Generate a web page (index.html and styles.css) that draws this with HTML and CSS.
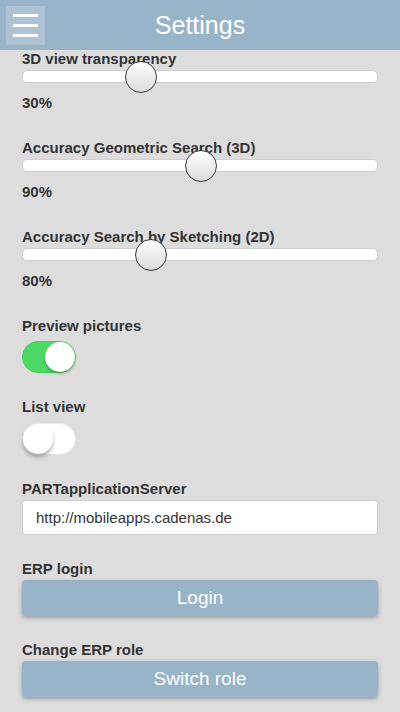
FILE: index.html
```html
<!DOCTYPE html>
<html>
<head>
<meta charset="utf-8">
<link rel="stylesheet" href="styles.css">
</head>
<body>
<header class="topbar">
  <button class="menu-btn" aria-label="Menu">
    <span class="bar"></span><span class="bar"></span><span class="bar"></span>
  </button>
  <h1 class="title">Settings</h1>
</header>
<main class="content">
  <section class="field field-slider">
    <div class="label">3D view transparency</div>
    <div class="track"><div class="thumb" style="left:102px"></div></div>
    <div class="value">30%</div>
  </section>
  <section class="field field-slider">
    <div class="label">Accuracy Geometric Search (3D)</div>
    <div class="track"><div class="thumb" style="left:162px"></div></div>
    <div class="value">90%</div>
  </section>
  <section class="field field-slider">
    <div class="label">Accuracy Search by Sketching (2D)</div>
    <div class="track"><div class="thumb" style="left:112px"></div></div>
    <div class="value">80%</div>
  </section>
  <section class="field field-toggle">
    <div class="label">Preview pictures</div>
    <div class="toggle on"><div class="knob"></div></div>
  </section>
  <section class="field field-toggle">
    <div class="label">List view</div>
    <div class="toggle off"><div class="knob"></div></div>
  </section>
  <section class="field field-input">
    <div class="label">PARTapplicationServer</div>
    <div class="input">http://mobileapps.cadenas.de</div>
  </section>
  <section class="field field-button">
    <div class="label">ERP login</div>
    <button class="btn">Login</button>
  </section>
  <section class="field field-button">
    <div class="label">Change ERP role</div>
    <button class="btn">Switch role</button>
  </section>
</main>
</body>
</html>
```
FILE: styles.css
```css
* { box-sizing: border-box; }
html, body {
  margin: 0;
  padding: 0;
  background: #dddddd;
  font-family: "Liberation Sans", Arial, sans-serif;
  color: #333333;
}
.topbar {
  height: 50px;
  background: #98b4c9;
  display: flex;
  align-items: center;
  justify-content: center;
  position: relative;
}
.menu-btn {
  position: absolute;
  left: 6px;
  top: 6px;
  width: 39px;
  height: 39px;
  border: none;
  padding: 0;
  margin: 0;
  background: #adc3d4;
  display: flex;
  flex-direction: column;
  align-items: center;
  justify-content: center;
  gap: 7px;
}
.menu-btn .bar {
  display: block;
  width: 25px;
  height: 3px;
  background: #ffffff;
}
.title {
  margin: 0;
  font-weight: normal;
  font-size: 25px;
  color: #ffffff;
  line-height: 50px;
}
.content {
  padding: 0 22px;
  display: flex;
  flex-direction: column;
}
.label {
  font-size: 15px;
  font-weight: bold;
  line-height: 18px;
  height: 18px;
  color: #333333;
}
.field-slider { margin-bottom: 27px; }
.field-slider .track {
  position: relative;
  margin-top: 2px;
  height: 13px;
  background: #ffffff;
  border: 1px solid #d0d0d0;
  border-radius: 5px;
}
.thumb {
  position: absolute;
  top: 50%;
  width: 32px;
  height: 32px;
  margin-top: -16px;
  border-radius: 50%;
  border: 1px solid #3a3a3a;
  background: linear-gradient(#ffffff, #dcdcdc);
}
.value {
  margin-top: 11px;
  font-size: 15px;
  font-weight: bold;
  line-height: 18px;
}
.field-toggle { margin-bottom: 25px; }
.toggle {
  position: relative;
  margin-top: 6px;
  width: 54px;
  height: 32px;
  border-radius: 16px;
}
.toggle.on {
  background: #4cd964;
  border: 1px solid #45cf5c;
}
.toggle.off {
  margin-top: 7px;
  background: #ffffff;
  border: 1px solid #e6e6e6;
}
.knob {
  position: absolute;
  top: 0;
  width: 30px;
  height: 30px;
  border-radius: 50%;
  background: #ffffff;
}
.toggle.on .knob {
  right: 0;
  box-shadow: 0 2px 3px rgba(0,0,0,0.25);
}
.toggle.off .knob {
  left: 0;
  box-shadow: 0 3px 4px rgba(0,0,0,0.3);
}
.field-input { margin-bottom: 25px; }
.input {
  margin-top: 2px;
  height: 35px;
  background: #ffffff;
  border: 1px solid #cfcfcf;
  border-radius: 4px;
  padding-left: 13px;
  font-size: 15px;
  line-height: 33px;
  color: #333333;
}
.field-button { margin-bottom: 25px; }
.btn {
  display: block;
  width: 100%;
  margin-top: 2px;
  height: 36px;
  border: none;
  border-radius: 4px;
  background: #98b4c9;
  color: #ffffff;
  font-family: "Liberation Sans", Arial, sans-serif;
  font-size: 19px;
  box-shadow: 0 2px 4px rgba(0,0,0,0.3);
}
```
